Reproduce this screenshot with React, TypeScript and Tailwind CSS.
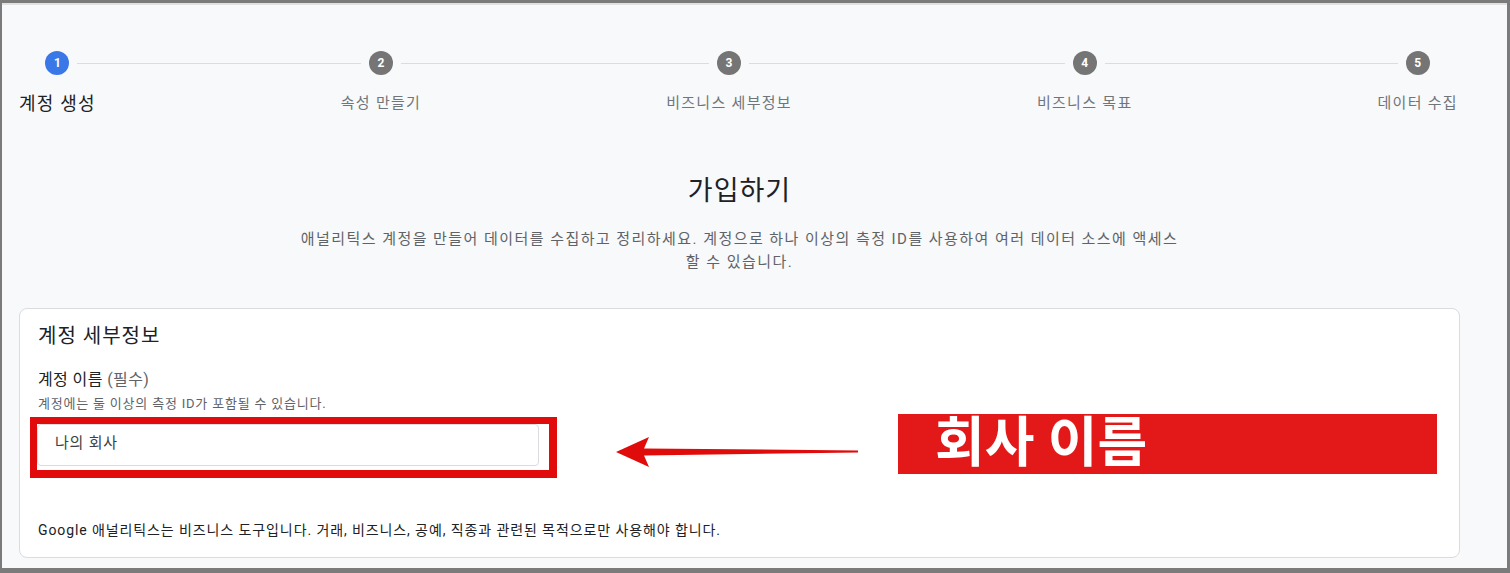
const font = { fontFamily: "Roboto, 'Noto Sans CJK KR', sans-serif" }

const steps = ['계정 생성', '속성 만들기', '비즈니스 세부정보', '비즈니스 목표', '데이터 수집']

function Stepper() {
  return (
    <div className="flex items-start pl-[17px] pr-[49px] pt-[46px]">
      {steps.map((label, i) => {
        const first = i === 0
        const last = i === steps.length - 1
        return (
          <div key={label} className="contents">
            <div className="flex flex-col items-center">
              <div className="flex w-full items-center">
                <div className={`h-px flex-1 ${first ? 'bg-transparent' : 'bg-[#dadce0]'} mr-2`} />
                <div
                  className={`flex h-6 w-6 shrink-0 items-center justify-center rounded-full text-[12px] font-bold text-white ${
                    first ? 'bg-[#3b78e7]' : 'bg-[#757575]'
                  }`}
                >
                  {i + 1}
                </div>
                <div className={`h-px flex-1 ${last ? 'bg-transparent' : 'bg-[#dadce0]'} ml-2`} />
              </div>
              <div className="mt-4 flex h-6 items-center whitespace-nowrap">
                <span
                  className={
                    first
                      ? 'text-[18px] tracking-[1.2px] text-[#202124]'
                      : 'text-[15px] tracking-[1.3px] text-[#70757a]'
                  }
                >
                  {label}
                </span>
              </div>
            </div>
            {!last && <div className="mt-3 h-px flex-1 bg-[#dadce0]" />}
          </div>
        )
      })}
    </div>
  )
}

function Arrow() {
  return (
    <svg width="246" height="33" viewBox="0 0 246 33" className="absolute left-[594px] top-[127px]">
      <polygon points="2,16 35,1 30,12.5 244,14.5 244,16.5 30,19.5 35,31" fill="#e00b0b" />
    </svg>
  )
}

export default function App() {
  return (
    <div className="h-[573px] w-[1510px] bg-[#7b7b7b] pb-[5px] pl-[2px] pr-[3px] pt-[3px]" style={font}>
      <div className="h-full border-t-2 border-[#dfe1e5] bg-[#f8f9fa]">
        <Stepper />

        <div className="ml-[17px] mt-[59px] flex w-[1441px] flex-col items-center text-center">
          <h1 className="text-[27px] leading-[34px] tracking-[1px] text-[#202124]">가입하기</h1>
          <p className="mt-[20px] text-[15px] leading-[23px] tracking-[1.45px] text-[#5f6368]">
            애널리틱스 계정을 만들어 데이터를 수집하고 정리하세요. 계정으로 하나 이상의 측정 ID를 사용하여 여러 데이터 소스에 액세스
            <br />할 수 있습니다.
          </p>
        </div>

        <div className="ml-[17px] mt-[34px] w-[1441px] rounded-lg border border-[#dadce0] bg-white pb-[17px] pl-[18px] pt-[13px]">
          <div className="relative">
            <h2 className="text-[20px] leading-[28px] tracking-[1px] text-[#202124]">계정 세부정보</h2>
            <div className="mt-[19px] text-[16px] leading-[22px] tracking-[0.4px] text-[#202124]">
              계정 이름 <span className="text-[#5f6368]">(필수)</span>
            </div>
            <div className="mt-[5px] text-[13px] leading-[16px] tracking-[0.8px] text-[#5f6368]">
              계정에는 둘 이상의 측정 ID가 포함될 수 있습니다.
            </div>
            <div className="relative ml-[-1px] mt-[12px] w-[502px]">
              <div className="flex h-[42px] items-center rounded border border-[#dadce0] pb-1 pl-[17px] text-[15px] tracking-[0.8px] text-[#3c4043]">
                나의 회사
              </div>
              <div className="pointer-events-none absolute -bottom-[12px] -left-[7px] -right-[18px] -top-[7px] border-[7px] border-b-[8px] border-r-[8px] border-[#e20b0b]" />
            </div>
            <p className="mt-[54px] text-[14px] leading-[20px] tracking-[0.9px] text-[#202124]">
              Google 애널리틱스는 비즈니스 도구입니다. 거래, 비즈니스, 공예, 직종과 관련된 목적으로만 사용해야 합니다.
            </p>

            <div className="absolute -left-[18px] -top-[13px] h-0 w-0">
              <Arrow />
              <div className="absolute left-[878px] top-[105px] flex h-[60px] w-[539px] items-center bg-[#e31919] pl-[37px]">
                <span className="text-[54px] font-bold leading-none text-white">회사 이름</span>
              </div>
            </div>
          </div>
        </div>
      </div>
    </div>
  )
}
